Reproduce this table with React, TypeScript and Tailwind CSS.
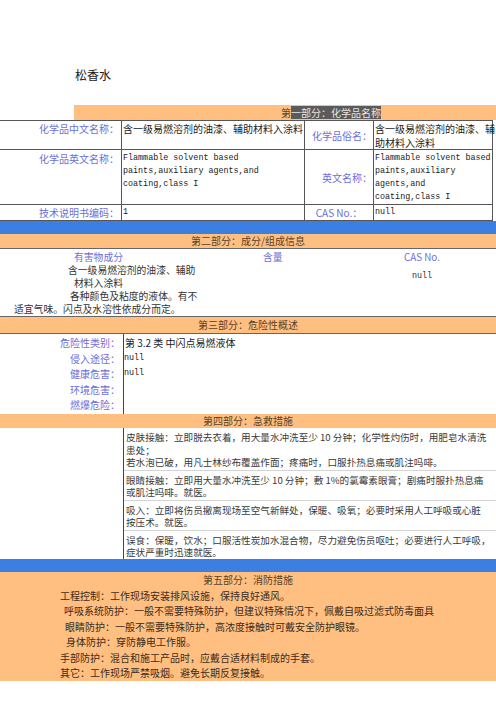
const orange = "bg-[#ffbf80]";

const firstAid = [
  [
    "皮肤接触：立即脱去衣着，用大量水冲洗至少 10 分钟；化学性灼伤时，用肥皂水清洗",
    "患处；",
    "若水泡已破，用凡士林纱布覆盖作面；疼痛时，口服扑热息痛或肌注吗啡。",
  ],
  [
    "眼睛接触：立即用大量水冲洗至少 10 分钟；敷 1%的氯霉素眼膏；剧痛时服扑热息痛",
    "或肌注吗啡。就医。",
  ],
  [
    "吸入：立即将伤员撤离现场至空气新鲜处，保暖、吸氧；必要时采用人工呼吸或心脏",
    "按压术。就医。",
  ],
  [
    "误食：保暖，饮水；口服活性炭加水混合物，尽力避免伤员呕吐；必要进行人工呼吸，",
    "症状严重时迅速就医。",
  ],
];

const fireLines = [
  { text: "工程控制：工作现场安装排风设施，保持良好通风。", pad: "pl-[60px]" },
  { text: "呼吸系统防护：一般不需要特殊防护，但建议特殊情况下，佩戴自吸过滤式防毒面具", pad: "pl-[64px]" },
  { text: "眼睛防护：一般不需要特殊防护，高浓度接触时可戴安全防护眼镜。", pad: "pl-[65px]" },
  { text: "身体防护：穿防静电工作服。", pad: "pl-[66px]" },
  { text: "手部防护：混合和施工产品时，应戴合适材料制成的手套。", pad: "pl-[60px]" },
  { text: "其它：工作现场严禁吸烟。避免长期反复接触。", pad: "pl-[60px]" },
];

const hazards = ["危险性类别：", "侵入途径：", "健康危害：", "环境危害：", "燃爆危险："];

const mono = "font-['Liberation_Mono',monospace] text-[8.4px]";
const label = "text-[#6e6ed8]";

const App = () => {
  return (
    <div className="w-[496px] h-[702px] bg-white overflow-hidden font-['Noto_Sans_CJK_SC',sans-serif] text-[10px] text-[#222]">
      {/* Title */}
      <div className="h-[105px] pt-[67px] pl-[75px] text-[12px] leading-[16px] text-[#1a1a1a]">松香水</div>

      {/* Part 1 */}
      <div className={`ml-[74px] h-[15px] ${orange} pl-[207px] leading-[15px] text-[#5a4128]`}>
        <span>第</span>
        <span className="inline-block h-[13px] leading-[13px] bg-[#5b5b5b] text-[#e6e6e6]">一部分：化学品名称</span>
      </div>
      <div className="w-[493px] grid grid-cols-[122px_183px_69px_119px] grid-rows-[29px_55px_16px] border-t border-r border-[#555]">
        <div className={`border-r border-b border-[#555] text-right pr-[2px] pt-[1px] leading-[14px] ${label}`}>化学品中文名称：</div>
        <div className="border-r border-b border-[#555] pl-[1px] pt-[1px] leading-[14px] whitespace-nowrap">含一级易燃溶剂的油漆、辅助材料入涂料</div>
        <div className={`border-r border-b border-[#555] flex items-center justify-end pr-[1px] ${label}`}>化学品俗名：</div>
        <div className="border-b border-[#555] pl-[1px] pt-[1px] leading-[14px]">
          <div className="whitespace-nowrap">含一级易燃溶剂的油漆、辅</div>
          <div>助材料入涂料</div>
        </div>

        <div className={`border-r border-b border-[#555] text-right pr-[2px] pt-[2px] leading-[13px] ${label}`}>化学品英文名称：</div>
        <div className={`border-r border-b border-[#555] pl-[1px] pt-[2px] leading-[13px] ${mono}`}>
          <div>Flammable solvent based</div>
          <div>paints,auxiliary agents,and</div>
          <div>coating,class I</div>
        </div>
        <div className={`border-r border-b border-[#555] flex items-center justify-end pr-[1px] ${label}`}>英文名称：</div>
        <div className={`border-b border-[#555] pl-[1px] pt-[2px] leading-[13px] ${mono}`}>
          <div className="whitespace-nowrap">Flammable solvent based</div>
          <div>paints,auxiliary</div>
          <div>agents,and</div>
          <div>coating,class I</div>
        </div>

        <div className={`border-r border-b border-[#555] text-right pr-[2px] leading-[15px] ${label}`}>技术说明书编码：</div>
        <div className={`border-r border-b border-[#555] pl-[1px] leading-[15px] ${mono}`}>1</div>
        <div className={`border-r border-b border-[#555] text-center leading-[15px] ${label}`}>CAS No.：</div>
        <div className={`border-b border-[#555] pl-[1px] leading-[15px] ${mono}`}>null</div>
      </div>

      <div className="h-[13px] bg-[#3c7fe2]" />

      {/* Part 2 */}
      <div className={`h-[15px] ${orange} border-b border-[#666] text-center leading-[14px] text-[#5a4128]`}>第二部分：成分/组成信息</div>
      <div className="h-[68px] border-b border-[#666] flex pt-[1.5px] text-[9.8px] leading-[13.2px] text-[#333]">
        <div className="w-[230px]">
          <div className={`pl-[74px] ${label}`}>有害物成分</div>
          <div className="pl-[68px] whitespace-nowrap">含一级易燃溶剂的油漆、辅助</div>
          <div className="pl-[74px]">材料入涂料</div>
          <div className="pl-[70px] whitespace-nowrap">各种颜色及粘度的液体。有不</div>
          <div className="pl-[14px] whitespace-nowrap">适宜气味。闪点及水溶性依成分而定。</div>
        </div>
        <div className={`w-[130px] pl-[33px] ${label}`}>含量</div>
        <div className="pl-[44px]">
          <div className={label}>CAS No.</div>
          <div className={`mt-[6px] pl-[8px] ${mono}`}>null</div>
        </div>
      </div>

      {/* Part 3 */}
      <div className={`h-[17px] ${orange} border-b border-[#666] text-center leading-[16px] text-[#5a4128]`}>第三部分：危险性概述</div>
      <div className="h-[80px] flex">
        <div className={`w-[124px] border-r border-[#444] text-right pr-[3px] pt-[1px] leading-[15.5px] ${label}`}>
          {hazards.map((h) => (
            <div key={h}>{h}</div>
          ))}
        </div>
        <div className="pt-[1px] leading-[15.5px] text-[#222]">
          <div className="pl-[1px]">第 3.2 类 中闪点易燃液体</div>
          <div className={mono}>null</div>
          <div className={mono}>null</div>
        </div>
      </div>

      {/* Part 4 */}
      <div className={`h-[14px] ${orange} text-center leading-[14px] text-[#5a4128]`}>第四部分：急救措施</div>
      <div className="h-[131px] flex overflow-hidden">
        <div className="w-[124px] shrink-0 border-r border-[#444]" />
        <div className="flex-1 min-w-0 text-[#3a3a3a] text-[9.6px] leading-[12.5px]">
          {firstAid.map((para, i) => (
            <div key={i} className={`pl-[2px] pt-[3px] pb-[1px] ${i < firstAid.length - 1 ? "border-b border-[#d4d4d4]" : ""}`}>
              {para.map((line) => (
                <div key={line} className="whitespace-nowrap">{line}</div>
              ))}
            </div>
          ))}
        </div>
      </div>

      <div className="h-[13px] bg-[#3c7fe2]" />

      {/* Part 5 */}
      <div className={`h-[109px] ${orange} leading-[15.5px] text-[#3d2c1c]`}>
        <div className="text-center text-[#5a4128]">第五部分：消防措施</div>
        {fireLines.map((l) => (
          <div key={l.text} className={`${l.pad} whitespace-nowrap`}>{l.text}</div>
        ))}
      </div>
    </div>
  );
};

export default App;
